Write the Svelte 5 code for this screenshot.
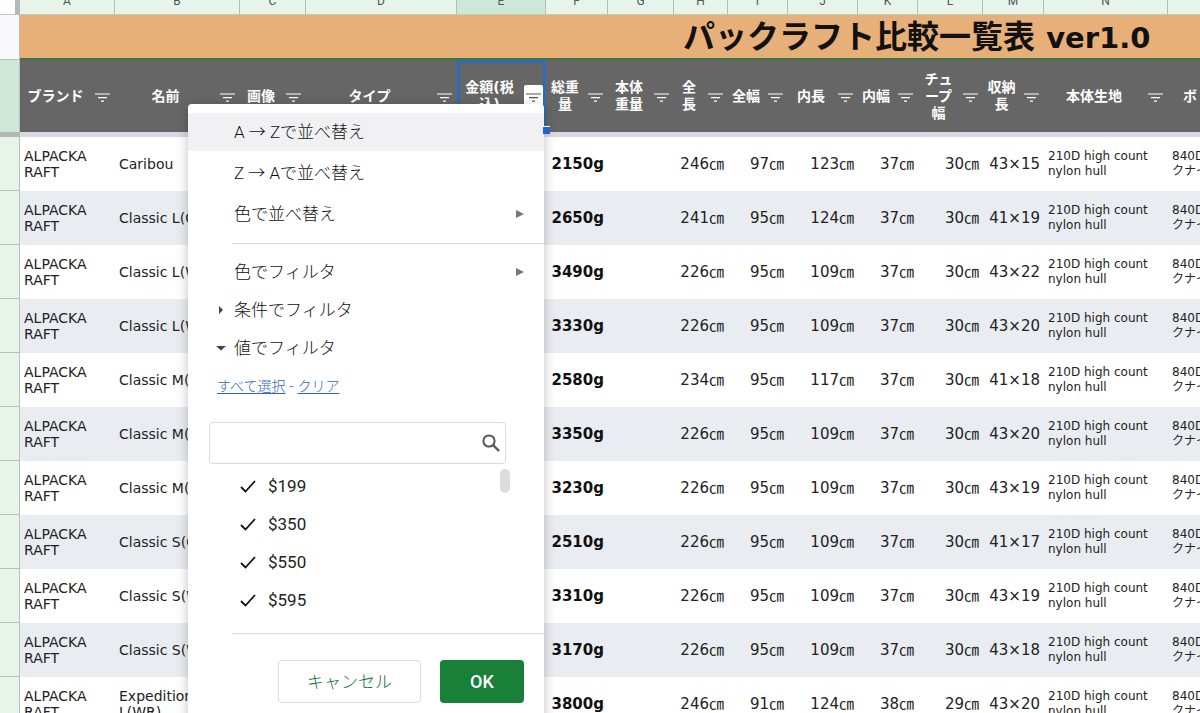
<script>
  const columns = [
    { letter: "A", label: "ブランド", width: 95 },
    { letter: "B", label: "名前", width: 125 },
    { letter: "C", label: "画像", width: 66 },
    { letter: "D", label: "タイプ", width: 151 },
    { letter: "E", label: "金額(税\n込)", width: 89, active: true },
    { letter: "F", label: "総重\n量", width: 62 },
    { letter: "G", label: "本体\n重量", width: 66 },
    { letter: "H", label: "全\n長", width: 54 },
    { letter: "I", label: "全幅", width: 60 },
    { letter: "J", label: "内長", width: 70 },
    { letter: "K", label: "内幅", width: 60 },
    { letter: "L", label: "チュ\nープ\n幅", width: 65 },
    { letter: "M", label: "収納\n長", width: 61 },
    { letter: "N", label: "本体生地", width: 124 },
    { letter: "O", label: "ボトム生地", width: 124 },
  ]

  // name, weight, length, width, inner length, inner width, tube, packed size
  const boats = [
    ["Caribou", "2150g", 246, 97, 123, 37, 30, "43×15"],
    ["Classic L(OP)", "2650g", 241, 95, 124, 37, 30, "41×19"],
    ["Classic L(WR)", "3490g", 226, 95, 109, 37, 30, "43×22"],
    ["Classic L(WR)", "3330g", 226, 95, 109, 37, 30, "43×20"],
    ["Classic M(OP)", "2580g", 234, 95, 117, 37, 30, "41×18"],
    ["Classic M(WR)", "3350g", 226, 95, 109, 37, 30, "43×20"],
    ["Classic M(WR)", "3230g", 226, 95, 109, 37, 30, "43×19"],
    ["Classic S(OP)", "2510g", 226, 95, 109, 37, 30, "41×17"],
    ["Classic S(WR)", "3310g", 226, 95, 109, 37, 30, "43×19"],
    ["Classic S(WR)", "3170g", 226, 95, 109, 37, 30, "43×18"],
    ["Expedition\nL(WR)", "3800g", 246, 91, 124, 38, 29, "43×20"],
  ]

  let search = $state("")
  let byValueOpen = $state(true)
  let values = $state([
    { label: "$199", checked: true },
    { label: "$350", checked: true },
    { label: "$550", checked: true },
    { label: "$595", checked: true },
  ])

  function setAll(checked) {
    values.forEach(value => (value.checked = checked))
  }
</script>

<div class="sheet">
  <table>
    <colgroup>
      <col class="gutterCol" />
      {#each columns as column}
        <col style="width: {column.width}px" />
      {/each}
    </colgroup>
    <thead>
      <tr class="letters">
        <td class="corner"></td>
        {#each columns as column}
          <th scope="col" class:active={column.active}>{column.letter}</th>
        {/each}
      </tr>
      <tr class="title">
        <td class="gutter plain"></td>
        <th colspan={columns.length}>パックラフト比較一覧表 <span>ver1.0</span></th>
      </tr>
      <tr class="heads">
        <td class="gutter active"></td>
        {#each columns as column}
          <th scope="col" class:selected={column.active}>
            <div class="head">
              <span>{column.label}</span>
              <button class="filter" aria-label="フィルタ">
                <svg width="15" height="9" viewBox="0 0 15 9" fill="none" stroke="currentColor" stroke-width="1.2">
                  <path d="M0 1h15M3 4.7h9M6 8.2h3" />
                </svg>
              </button>
            </div>
            {#if column.active}<i class="handle"></i>{/if}
          </th>
        {/each}
      </tr>
      <tr class="freeze">
        <td></td>
        <td colspan={columns.length}></td>
      </tr>
    </thead>
    <tbody>
      {#each boats as [name, weight, length, width, innerLength, innerWidth, tube, packed]}
        <tr>
          <td class="gutter"></td>
          <td class="text">ALPACKA RAFT</td>
          <td class="text">{name}</td>
          <td></td>
          <td></td>
          <td></td>
          <td class="weight">{weight}</td>
          <td></td>
          <td>{length}㎝</td>
          <td>{width}㎝</td>
          <td>{innerLength}㎝</td>
          <td>{innerWidth}㎝</td>
          <td>{tube}㎝</td>
          <td>{packed}</td>
          <td class="fabric">210D high count nylon hull</td>
          <td class="fabric">840Dバリスティッ<br />クナイロン</td>
        </tr>
      {/each}
    </tbody>
  </table>

  <div class="menu">
    <div class="sorts">
      <button class="item hover">A → Zで並べ替え</button>
      <button class="item">Z → Aで並べ替え</button>
      <button class="item">色で並べ替え {@render arrow()}</button>
    </div>
    <hr />
    <button class="item">色でフィルタ {@render arrow()}</button>
    <button class="item" aria-expanded="false">
      <svg class="caret" width="10" height="10" viewBox="0 0 10 10"><path d="M3 1l4 4-4 4z" /></svg>
      条件でフィルタ
    </button>
    <button class="item" aria-expanded={byValueOpen} onclick={() => (byValueOpen = !byValueOpen)}>
      <svg class="caret" width="10" height="10" viewBox="0 0 10 10"><path d="M0 3h10L5 7.5z" /></svg>
      値でフィルタ
    </button>
    {#if byValueOpen}
      <div class="links">
        <a href="#all" onclick={() => setAll(true)}>すべて選択</a> <span>-</span> <a href="#clear" onclick={() => setAll(false)}>クリア</a>
      </div>
      <div class="search">
        <input type="text" aria-label="検索" bind:value={search} />
        <svg width="18" height="18" viewBox="0 0 18 18" fill="none" stroke="#555" stroke-width="2">
          <circle cx="7" cy="7" r="5.6" />
          <path d="M11 11l6 6" stroke-width="2.4" />
        </svg>
      </div>
      <div class="values">
        <div class="list">
          {#each values.filter(value => value.label.includes(search)) as value}
            <label>
              <input type="checkbox" bind:checked={value.checked} />
              <svg width="16" height="13" viewBox="0 0 16 13" fill="none" stroke="#111" stroke-width="1.8">
                <path d="M1 7l4.5 4.5L15 1" />
              </svg>
              {value.label}
            </label>
          {/each}
        </div>
        <span class="thumb"></span>
      </div>
    {/if}
    <hr />
    <div class="actions">
      <button class="cancel">キャンセル</button>
      <button class="ok">OK</button>
    </div>
  </div>
</div>

{#snippet arrow()}
  <svg class="more" width="8" height="8" viewBox="0 0 8 8"><path d="M0 0l8 4-8 4z" /></svg>
{/snippet}

<style>
  .sheet {
    position: relative;
    height: 100vh;
    overflow: hidden;
    background: #fff;
    color: #222;
    font-family: "DejaVu Sans", "Noto Sans CJK JP", sans-serif;
  }

  button {
    border: 0;
    background: none;
    font: inherit;
    color: inherit;
    cursor: pointer;
  }

  table {
    width: 100%;
    min-width: 1292px;
    margin-top: -10px;
    table-layout: fixed;
    border-collapse: separate;
    border-spacing: 0;
  }

  .gutterCol {
    width: 20px;
  }

  td,
  th {
    box-sizing: border-box;
    padding: 0 4px;
  }

  .letters th,
  .corner {
    height: 25px;
    padding-bottom: 2px;
    background: #e6f4ea;
    border-right: 1px solid #b5bdb8;
    border-bottom: 1px solid #c0c8c2;
    font: 12px/16px Roboto, sans-serif;
    color: #555;
  }

  .letters .corner {
    background: #fff;
    border-right: 5px solid #b7b7b7;
  }

  .letters .active {
    background: #cee8d7;
  }

  .gutter {
    background: #e6f4ea;
    border-right: 1px solid #b9bfbb;
    border-bottom: 1px solid #b9bfbb;
  }

  .gutter.plain {
    background: #f8f9fa;
  }

  .gutter.active {
    background: #cee8d7;
    border-bottom: 0;
  }

  .title th {
    height: 44px;
    padding: 2px 0 0 663px;
    background: #e8b079;
    border-bottom: 2px solid #3f7440;
    font-size: 32px;
    line-height: 40px;
    text-align: left;
    white-space: nowrap;
    color: #111;

    span {
      font-size: 29px;
    }
  }

  .heads th {
    position: relative;
    height: 72px;
    padding: 0 3px 0 0;
    background: #666;
    color: #fff;
    font-size: 14px;
    line-height: 17px;
  }

  .heads .selected {
    box-shadow: inset 0 0 0 3px #2f6bbd;
  }

  .head {
    display: flex;
    align-items: center;

    span {
      flex: 1;
      padding-right: 2px;
      white-space: pre;
    }
  }

  .filter {
    display: grid;
    place-items: center;
    width: 19px;
    height: 22px;
    padding: 2px 0 0;
    border-radius: 2px;
  }

  .selected .filter {
    background: #fff;
    color: #555;
  }

  .handle {
    position: absolute;
    right: -4px;
    bottom: -2px;
    z-index: 1;
    width: 7px;
    height: 7px;
    background: #1a66c9;
    border-top: 1px solid #fff;
  }

  .freeze td {
    height: 5px;
    background: #d9d9e4;
  }

  .freeze td:first-child {
    background: #b7b7b7;
  }

  tbody td {
    height: 54px;
    font-size: 15px;
    line-height: 18px;
    text-align: right;
    white-space: nowrap;
  }

  tbody tr:nth-child(even) td:not(.gutter) {
    background: #e9edf1;
  }

  tbody .text {
    font-size: 14px;
    line-height: 16px;
    text-align: left;
    white-space: pre-line;
  }

  tbody .weight {
    font-weight: bold;
    color: #111;
  }

  tbody .fabric {
    padding-right: 0;
    font-size: 12px;
    line-height: 15px;
    text-align: left;
    white-space: normal;
  }

  .menu {
    position: absolute;
    top: 104px;
    left: 188px;
    box-sizing: border-box;
    width: 356px;
    padding: 9px 0 20px;
    background: #fff;
    border-radius: 4px;
    box-shadow: 0 3px 12px rgba(0, 0, 0, 0.25);
    color: #111;
    font-family: Roboto, "Noto Sans CJK JP", sans-serif;
    font-size: 17px;
    font-weight: 300;
    line-height: 24px;

    hr {
      margin: 10px 0 9px 44px;
      border: 0;
      border-top: 1px solid #d5d7da;
    }
  }

  .sorts {
    display: grid;
    gap: 3px;
  }

  .item {
    position: relative;
    display: flex;
    align-items: center;
    justify-content: space-between;
    width: 100%;
    height: 38px;
    padding: 0 20px 0 46px;
    text-align: left;
  }

  .hover {
    background: #f1f1f3;
  }

  .more {
    fill: #777;
  }

  .caret {
    position: absolute;
    left: 28px;
    fill: #444;
  }

  .links {
    display: flex;
    gap: 4px;
    height: 38px;
    padding-left: 29px;
    font-size: 14px;
    line-height: 38px;
    color: #2f66c0;

    a {
      color: inherit;
      text-underline-offset: 2px;
    }
  }

  .search {
    display: flex;
    align-items: center;
    box-sizing: border-box;
    height: 42px;
    margin: 17px 38px 3px 21px;
    padding-right: 5px;
    border: 1px solid #d8dade;
    border-radius: 4px;

    input {
      flex: 1;
      min-width: 0;
      padding: 0 12px;
      border: 0;
      outline: 0;
      background: none;
      font: inherit;
    }
  }

  .values {
    display: flex;
    justify-content: space-between;
    padding: 0 34px 4px 52px;

    label {
      display: flex;
      align-items: center;
      gap: 12px;
      height: 38px;
      color: #222;
      font-weight: 400;
    }

    input {
      position: absolute;
      opacity: 0;
    }

    input:not(:checked) + svg {
      visibility: hidden;
    }
  }

  .thumb {
    width: 10px;
    height: 24px;
    margin-top: 2px;
    border-radius: 5px;
    background: #dadce0;
  }

  .actions {
    display: flex;
    justify-content: flex-end;
    gap: 19px;
    padding: 17px 20px 0;

    button {
      height: 43px;
      border-radius: 4px;
    }

    .cancel {
      width: 143px;
      border: 1px solid #dadce0;
      color: #0f6f30;
    }

    .ok {
      width: 84px;
      background: #188038;
      color: #fff;
      font-size: 18px;
      font-weight: 500;
    }
  }
</style>
